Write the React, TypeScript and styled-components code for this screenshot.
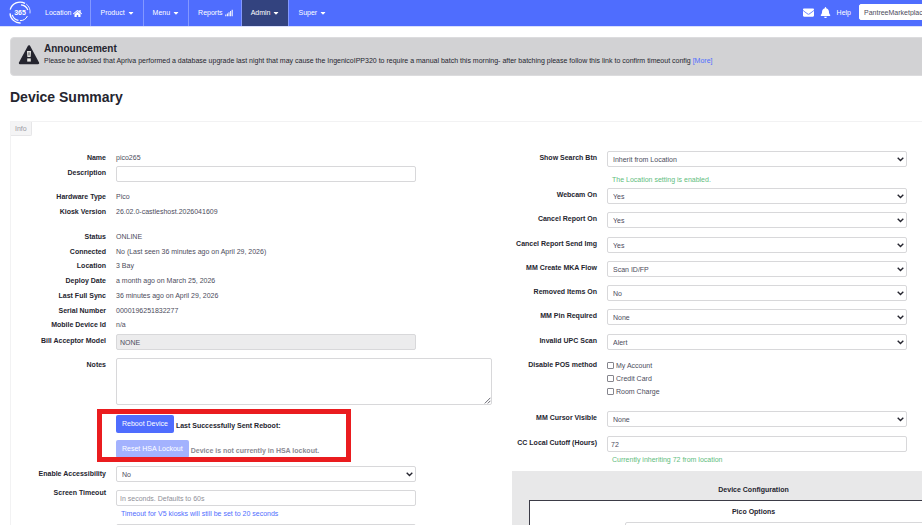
import React, { useId } from "react";
import styled, { createGlobalStyle } from "styled-components";
import { FaHome, FaSignal, FaEnvelope, FaBell, FaCaretDown } from "react-icons/fa";

const ink = "#25252f";
const body = "#4c4c5c";
const brand = "#4f6dfe";
const line = "#d8d8da";

const GlobalStyle = createGlobalStyle`
  *, *::before, *::after { box-sizing: border-box; }
  html, body { margin: 0; background: #fff; }
  body {
    font-family: "Liberation Sans", Arial, sans-serif;
    font-size: 7px;
    line-height: 15px;
    color: ${body};
  }
  input, select, textarea, button { font: inherit; color: inherit; margin: 0; }
`;

const Shell = styled.div`
  height: 100vh;
  overflow: hidden;
`;

const Page = styled.div`
  min-width: 1006px;
`;

const NavBar = styled.header`
  display: flex;
  align-items: stretch;
  height: 26px;
  background: ${brand};
  box-shadow: 0 1px 0 #d9dffc;
`;

const Brand = styled.a`
  display: flex;
  align-items: flex-start;
  padding: 1px 5px 0 9px;
`;

const NavLinks = styled.nav`
  display: flex;
  flex: 1;
`;

const NavItem = styled.a<{ $active?: boolean; $last?: boolean }>`
  display: flex;
  align-items: center;
  gap: 2px;
  padding: 0 8px 0 9px;
  line-height: 24px;
  color: #fff;
  text-decoration: none;
  background: ${(p) => (p.$active ? "#33437f" : "transparent")};
  border-right: ${(p) => (p.$last ? 0 : 1)}px solid #8398ff;
`;

const NavTools = styled.div`
  display: flex;
  align-items: center;
  gap: 6px;
  padding-bottom: 2px;
  color: #fff;
`;

const IconLink = styled.a`
  display: flex;
  color: #fff;
  text-decoration: none;
`;

const OrgInput = styled.input`
  width: 147px;
  height: 16px;
  margin-left: 2px;
  padding: 0 4px;
  border: 1px solid #fff;
  border-radius: 2px;
  background: #fff;
  color: ${body};
  outline: none;
`;

const Banner = styled.section`
  display: flex;
  align-items: flex-start;
  gap: 4px;
  margin: 11px 10px 0;
  padding: 5px 7px 8px;
  min-height: 38px;
  background: #d2d2d4;
  border: 1px solid #dcdcde;
  border-radius: 4px;
  color: ${ink};
`;

const BannerTitle = styled.h2`
  margin: 0;
  font-size: 10px;
  line-height: 12px;
`;

const BannerText = styled.p`
  margin: 0;
  line-height: 12px;
`;

const TextLink = styled.a`
  color: ${brand};
  text-decoration: none;
`;

const Title = styled.h1`
  margin: 11px 10px 14px;
  font-size: 14px;
  line-height: 20px;
  color: ${ink};
`;

const Panel = styled.main`
  margin: 0 10px;
  border: 1px solid #f2f2f3;
`;

const Tab = styled.button`
  display: block;
  height: 14px;
  padding: 0 4px;
  border: 1px solid #e6e6e8;
  border-width: 0 1px 1px 0;
  border-radius: 0 0 2px 0;
  background: #f4f4f5;
  color: #9a9aa2;
  line-height: 13px;
`;

const Columns = styled.form`
  display: grid;
  grid-template-columns: 1fr 1fr;
  gap: 18px;
  padding-top: 14px;
`;

const Column = styled.div`
  min-width: 0;
`;

const EvenRows = styled.div<{ $height: number; $gap?: number; $line?: number }>`
  display: grid;
  grid-auto-rows: 1fr;
  min-height: ${(p) => p.$height}px;
  margin-top: ${(p) => p.$gap ?? 0}px;
  line-height: ${(p) => p.$line ?? 15}px;
`;

const Row = styled.div<{ $label: number; $gap?: number }>`
  display: grid;
  grid-template-columns: ${(p) => p.$label}px minmax(0, 1fr);
  column-gap: 10px;
  align-items: start;
  margin-top: ${(p) => p.$gap ?? 0}px;
`;

const Label = styled.label`
  font-weight: 700;
  text-align: right;
  color: ${ink};
`;

const Control = styled.div<{ $top?: number }>`
  padding-top: ${(p) => p.$top ?? 0}px;
`;

const TextInput = styled.input`
  display: block;
  width: 300px;
  height: 16px;
  padding: 0 3px;
  border: 1px solid ${line};
  border-radius: 2px;
  background: #fff;
  outline: none;
  &:disabled { background: #ececed; color: ${body}; }
  &::placeholder { color: #8f8f98; opacity: 1; }
`;

const SelectWrap = styled.div`
  position: relative;
  width: 300px;
  height: 16px;
`;

const SelectBox = styled.select`
  display: block;
  width: 100%;
  height: 16px;
  padding: 0 16px 0 5px;
  border: 1px solid ${line};
  border-radius: 2px;
  background: #fff;
  appearance: none;
  outline: none;
`;

const Chevron = styled.svg`
  position: absolute;
  right: 3px;
  top: 6px;
  pointer-events: none;
`;

const NotesWrap = styled.div`
  position: relative;
  width: 376px;
`;

const NotesArea = styled.textarea`
  display: block;
  width: 100%;
  height: 47px;
  padding: 3px;
  border: 1px solid ${line};
  border-radius: 2px;
  resize: none;
  outline: none;
`;

const Grip = styled.svg`
  position: absolute;
  right: 1px;
  bottom: 1px;
  pointer-events: none;
`;

const Hint = styled.p<{ $tone: "green" | "blue" }>`
  margin: 0;
  padding-left: 5px;
  color: ${(p) => (p.$tone === "green" ? "#62bd7e" : brand)};
`;

const Actions = styled.div`
  position: relative;
  display: grid;
  gap: 7px;
  margin: 10px 0 8px 105px;
`;

const ActionRow = styled.div<{ $muted?: boolean }>`
  display: flex;
  align-items: flex-end;
  gap: 2px;
  font-weight: 700;
  line-height: 14px;
  color: ${(p) => (p.$muted ? "#8b8b93" : ink)};
`;

const ActionButton = styled.button`
  height: 18px;
  padding: 0 6px;
  border: 0;
  border-radius: 2px;
  background: ${brand};
  color: #fff;
  font-weight: 400;
  &:disabled { background: #a3b2fe; }
`;

const Marker = styled.div`
  position: absolute;
  left: -19px;
  top: -6px;
  width: 254px;
  height: 53px;
  border: 5px solid #ea1c1f;
  pointer-events: none;
`;

const CheckLine = styled.label`
  display: flex;
  align-items: center;
  gap: 2px;
  height: 13px;
`;

const CheckBox = styled.input`
  appearance: none;
  width: 7px;
  height: 7px;
  border: 1px solid #85858d;
  border-radius: 1px;
  background: #fff;
  &:checked { background: ${brand}; }
`;

const Config = styled.section`
  margin-top: 4px;
  padding: 11px 17px 0;
  min-height: 200px;
  background: #e8e8e9;
`;

const ConfigTitle = styled.h3`
  margin: 0 0 3px;
  font-size: 7px;
  line-height: 15px;
  text-align: center;
  color: ${ink};
`;

const ConfigBox = styled.div`
  border: 1px solid #3b3b46;
  background: #fff;
  padding-top: 3px;
  min-height: 120px;
`;

const ConfigFields = styled.div`
  padding-left: 95px;
`;

function Logo() {
  return (
    <svg width="22" height="23" viewBox="0 0 22 23" fill="none" stroke="#fff" aria-label="365">
      <path d="M1.2 8.6A10.2 10.2 0 0 1 16 2.4" strokeWidth="1.3" />
      <path d="M17.2 3A10.2 10.2 0 0 1 21 12.4" strokeWidth=".8" />
      <path d="M12 3.8A7.9 7.9 0 0 1 18.8 9" strokeWidth="1.2" />
      <path d="M1 12.4A10.2 10.2 0 0 0 11.6 22" strokeWidth="1.3" />
      <path d="M3.3 13.8A7.9 7.9 0 0 0 9.4 19.4" strokeWidth="1.2" />
      <path d="M11 19.6A7.9 7.9 0 0 0 18.4 15" strokeWidth="1" />
      <text
        x="11"
        y="14"
        textAnchor="middle"
        fontFamily="Liberation Sans, Arial, sans-serif"
        fontWeight="700"
        fontSize="7"
        fill="#fff"
        stroke="none"
      >
        365
      </text>
    </svg>
  );
}

function Warning() {
  return (
    <svg width="22" height="22" viewBox="0 0 22 22" aria-hidden="true">
      <path d="M11 3.4 20 20H2Z" fill={ink} stroke={ink} strokeWidth="2.4" strokeLinejoin="round" />
      <path d="M9 8h4l-.4 6H9.4Z" fill="#e6e6e2" />
      <path d="M10.6 9.2h.8v3.2h-.8Z" fill={ink} />
      <path d="M9.2 15.4h3.6v3.2H9.2Z" fill="#e6e6e2" />
    </svg>
  );
}

type FieldProps = { label: string; labelWidth?: number; gap?: number; top?: number };

function SelectField({ label, value, labelWidth = 85, gap, top = 1 }: FieldProps & { value: string }) {
  const id = useId();
  return (
    <Row $label={labelWidth} $gap={gap}>
      <Label htmlFor={id}>{label}</Label>
      <Control $top={top}>
        <SelectWrap>
          <SelectBox id={id} defaultValue={value}>
            <option>{value}</option>
          </SelectBox>
          <Chevron width="7" height="5" viewBox="0 0 7 5" fill="none" stroke={ink} strokeWidth="1.4">
            <path d="M.7.8 3.5 3.5 6.3.8" />
          </Chevron>
        </SelectWrap>
      </Control>
    </Row>
  );
}

function InputField({
  label,
  labelWidth = 95,
  gap,
  top = 1,
  ...rest
}: FieldProps & { defaultValue?: string; placeholder?: string; disabled?: boolean }) {
  const id = useId();
  return (
    <Row $label={labelWidth} $gap={gap}>
      <Label htmlFor={id}>{label}</Label>
      <Control $top={top}>
        <TextInput id={id} type="text" {...rest} />
      </Control>
    </Row>
  );
}

function Info({ label, value, gap }: { label: string; value: string; gap?: number }) {
  return (
    <Row $label={95} $gap={gap}>
      <Label as="span">{label}</Label>
      <span>{value}</span>
    </Row>
  );
}

const status = [
  ["Status", "ONLINE"],
  ["Connected", "No (Last seen 36 minutes ago on April 29, 2026)"],
  ["Location", "3 Bay"],
  ["Deploy Date", "a month ago on March 25, 2026"],
  ["Last Full Sync", "36 minutes ago on April 29, 2026"],
  ["Serial Number", "0000196251832277"],
  ["Mobile Device Id", "n/a"],
];

const settings = [
  ["Webcam On", "Yes"],
  ["Cancel Report On", "Yes"],
  ["Cancel Report Send Img", "Yes"],
  ["MM Create MKA Flow", "Scan ID/FP"],
  ["Removed Items On", "No"],
  ["MM Pin Required", "None"],
  ["Invalid UPC Scan", "Alert"],
];

export default function App() {
  return (
    <Shell>
      <GlobalStyle />
      <Page>
        <NavBar>
          <Brand href="#">
            <Logo />
          </Brand>
          <NavLinks>
            <NavItem href="#">Location <FaHome size={9} /></NavItem>
            <NavItem href="#">Product <FaCaretDown size={8} /></NavItem>
            <NavItem href="#">Menu <FaCaretDown size={8} /></NavItem>
            <NavItem href="#">Reports <FaSignal size={8} /></NavItem>
            <NavItem href="#" $active>Admin <FaCaretDown size={8} /></NavItem>
            <NavItem href="#" $last>Super <FaCaretDown size={8} /></NavItem>
          </NavLinks>
          <NavTools>
            <IconLink href="#" aria-label="Messages"><FaEnvelope size={11} /></IconLink>
            <IconLink href="#" aria-label="Alerts"><FaBell size={11} /></IconLink>
            <IconLink href="#">Help</IconLink>
            <OrgInput aria-label="Organization" defaultValue="PantreeMarketplace" />
          </NavTools>
        </NavBar>

        <Banner>
          <Warning />
          <div>
            <BannerTitle>Announcement</BannerTitle>
            <BannerText>
              Please be advised that Apriva performed a database upgrade last night that may cause the
              IngenicoIPP320 to require a manual batch this morning- after batching please follow this
              link to confirm timeout config <TextLink href="#">[More]</TextLink>
            </BannerText>
          </div>
        </Banner>

        <Title>Device Summary</Title>

        <Panel>
          <Tab type="button">Info</Tab>
          <Columns>
            <Column>
              <Info label="Name" value="pico265" />
              <InputField label="Description" />
              <Info label="Hardware Type" value="Pico" gap={7} />
              <Info label="Kiosk Version" value="26.02.0-castleshost.2026041609" />
              <EvenRows $height={103} $gap={11} $line={14}>
                {status.map(([label, value]) => (
                  <Info key={label} label={label} value={value} />
                ))}
              </EvenRows>
              <InputField label="Bill Acceptor Model" defaultValue="NONE" disabled />
              <Row $label={95} $gap={7}>
                <Label htmlFor="notes">Notes</Label>
                <Control $top={1}>
                  <NotesWrap>
                    <NotesArea id="notes" />
                    <Grip width="7" height="7" viewBox="0 0 7 7" stroke="#55555f" strokeWidth=".9">
                      <path d="M.8 6.4 6.4.8M3.8 6.4 6.4 3.8" />
                    </Grip>
                  </NotesWrap>
                </Control>
              </Row>
              <Actions>
                <ActionRow>
                  <ActionButton type="button">Reboot Device</ActionButton>
                  <span>Last Successfully Sent Reboot:</span>
                </ActionRow>
                <ActionRow $muted>
                  <ActionButton type="button" disabled>Reset HSA Lockout</ActionButton>
                  <span>Device is not currently in HSA lockout.</span>
                </ActionRow>
                <Marker />
              </Actions>
              <SelectField label="Enable Accessibility" value="No" labelWidth={95} top={0} />
              <InputField label="Screen Timeout" placeholder="In seconds. Defaults to 60s" gap={3} top={5} />
              <Row $label={95}>
                <span />
                <Hint $tone="blue">Timeout for V5 kiosks will still be set to 20 seconds</Hint>
              </Row>
              <Row $label={95} $gap={3}>
                <span />
                <TextInput aria-label="Additional setting" />
              </Row>
            </Column>

            <Column>
              <SelectField label="Show Search Btn" value="Inherit from Location" />
              <Row $label={85} $gap={5}>
                <span />
                <Hint $tone="green">The Location setting is enabled.</Hint>
              </Row>
              <EvenRows $height={170}>
                {settings.map(([label, value]) => (
                  <SelectField key={label} label={label} value={value} />
                ))}
              </EvenRows>
              <Row $label={85} role="group" aria-labelledby="pos-method">
                <Label as="span" id="pos-method">Disable POS method</Label>
                <Control $top={2}>
                  {["My Account", "Credit Card", "Room Charge"].map((name) => (
                    <CheckLine key={name}>
                      <CheckBox type="checkbox" />
                      {name}
                    </CheckLine>
                  ))}
                </Control>
              </Row>
              <SelectField label="MM Cursor Visible" value="None" gap={12} />
              <InputField label="CC Local Cutoff (Hours)" labelWidth={85} defaultValue="72" gap={8} />
              <Row $label={85}>
                <span />
                <Hint $tone="green">Currently inheriting 72 from location</Hint>
              </Row>
              <Config>
                <ConfigTitle>Device Configuration</ConfigTitle>
                <ConfigBox>
                  <ConfigTitle as="h4">Pico Options</ConfigTitle>
                  <ConfigFields>
                    <TextInput aria-label="Pico option" />
                  </ConfigFields>
                </ConfigBox>
              </Config>
            </Column>
          </Columns>
        </Panel>
      </Page>
    </Shell>
  );
}
